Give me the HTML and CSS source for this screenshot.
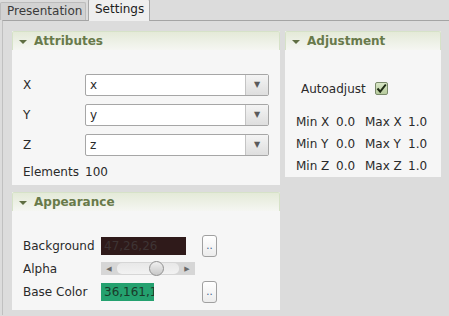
FILE: index.html
```html
<!DOCTYPE html>
<html>
<head>
    <title>Settings</title>
    <link rel="stylesheet" href="styles.css">
</head>
<body>
    <div class="tabs">
        <div class="tab">Presentation</div>
        <div class="tab active">Settings</div>
    </div>
    <div class="pane">
        <div class="column left">
            <div class="group attributes">
                <div class="group-header"><span class="arrow"></span>Attributes</div>
                <div class="group-body">
                    <div class="row">
                        <span class="label">X</span>
                        <div class="combo"><span class="combo-text">x</span><span class="combo-button">&#9660;</span></div>
                    </div>
                    <div class="row">
                        <span class="label">Y</span>
                        <div class="combo"><span class="combo-text">y</span><span class="combo-button">&#9660;</span></div>
                    </div>
                    <div class="row">
                        <span class="label">Z</span>
                        <div class="combo"><span class="combo-text">z</span><span class="combo-button">&#9660;</span></div>
                    </div>
                    <div class="row elements">
                        <span class="label">Elements</span>
                        <span>100</span>
                    </div>
                </div>
            </div>
            <div class="group appearance">
                <div class="group-header"><span class="arrow"></span>Appearance</div>
                <div class="group-body">
                    <div class="row color-row">
                        <span class="label">Background</span>
                        <div class="swatch-box"><span class="swatch dark">47,26,26</span></div>
                        <button class="pick">..</button>
                    </div>
                    <div class="row alpha-row">
                        <span class="label">Alpha</span>
                        <div class="slider">
                            <span class="slider-arrow">&#9664;</span>
                            <span class="groove"><span class="handle"></span></span>
                            <span class="slider-arrow">&#9654;</span>
                        </div>
                    </div>
                    <div class="row color-row">
                        <span class="label">Base Color</span>
                        <div class="swatch-box"><span class="swatch green">36,161,1</span></div>
                        <button class="pick">..</button>
                    </div>
                </div>
            </div>
        </div>
        <div class="column right">
            <div class="group adjustment">
                <div class="group-header"><span class="arrow"></span>Adjustment</div>
                <div class="group-body">
                    <div class="auto-row">
                        <span>Autoadjust</span>
                        <span class="check">
                            <svg width="11" height="11" viewBox="0 0 11 11"><path d="M1.5 5.5 L4.2 8.6 L9.8 1.5" fill="none" stroke="#1e2a14" stroke-width="2"/></svg>
                        </span>
                    </div>
                    <div class="range-row"><span class="r-name">Min X</span><span class="r-val">0.0</span><span class="r-max">Max X</span><span>1.0</span></div>
                    <div class="range-row"><span class="r-name">Min Y</span><span class="r-val">0.0</span><span class="r-max">Max Y</span><span>1.0</span></div>
                    <div class="range-row"><span class="r-name">Min Z</span><span class="r-val">0.0</span><span class="r-max">Max Z</span><span>1.0</span></div>
                </div>
            </div>
        </div>
    </div>
</body>
</html>
```

FILE: styles.css
```css
body {
    margin: 0;
    background-color: #dcdcdc;
    font-family: "DejaVu Sans", sans-serif;
    font-size: 12px;
    color: #2a2a2a;
    width: 449px;
    height: 316px;
    overflow: hidden;
}

/* tab bar */
.tabs {
    display: flex;
    height: 20px;
    align-items: flex-end;
}

.tab {
    height: 17px;
    line-height: 17px;
    padding: 0 6px;
    background-color: #d2d2d2;
    border: 1px solid #bcbcbc;
    border-bottom: none;
    border-radius: 2px 2px 0 0;
    color: #3a3a3a;
    margin-right: 2px;
    width: 72px;
}

.tab.active {
    height: 21px;
    line-height: 19px;
    background-color: #efefef;
    border-color: #a8a8a8;
    color: #202020;
    width: 48px;
    margin-bottom: -1px;
    position: relative;
}

.pane {
    display: flex;
    margin-left: 2px;
    border-top: 1px solid #a4a4a4;
    border-left: 1px solid #c0c0c0;
    padding: 10px 0 0 9px;
    gap: 5px;
    height: 295px;
    box-sizing: border-box;
}

.column {
    display: flex;
    flex-direction: column;
    gap: 7px;
}

.column.left {
    width: 268px;
}

.column.right {
    width: 156px;
}

/* group boxes */
.group {
    background-color: #f6f6f6;
}

.group-header {
    height: 18px;
    line-height: 18px;
    border: 1px solid #d6e2c8;
    border-bottom: none;
    border-radius: 2px 2px 0 0;
    background: linear-gradient(#e4ead8, #f5f6f2);
    font-weight: bold;
    font-size: 12px;
    color: #687a4a;
    padding-left: 6px;
    display: flex;
    align-items: center;
}

.arrow {
    width: 0;
    height: 0;
    border-left: 4px solid transparent;
    border-right: 4px solid transparent;
    border-top: 4px solid #5f6e42;
    margin-right: 7px;
    margin-top: 1px;
}

.group-body {
    padding: 0 11px;
}

.attributes {
    height: 154px;
}

.attributes .group-body {
    padding-top: 24px;
}

.row {
    display: flex;
    align-items: center;
}

.attributes .row {
    height: 22px;
    margin-bottom: 8px;
}

.label {
    width: 62px;
}

.combo {
    width: 182px;
    height: 20px;
    border: 1px solid #a6a6a6;
    border-radius: 2px;
    background-color: #fff;
    display: flex;
}

.combo-text {
    flex: 1;
    line-height: 20px;
    padding-left: 4px;
    border-right: 1px solid #c4c4c4;
}

.combo-button {
    width: 22px;
    text-align: center;
    font-size: 8px;
    line-height: 20px;
    color: #5a5a5a;
    background: linear-gradient(#f4f4f4, #dedede);
}

.row.elements {
    height: 16px;
    margin-top: 2px;
}

.appearance {
    height: 118px;
}

.appearance .group-body {
    padding-top: 23px;
}

.appearance .label {
    width: 78px;
}

.color-row {
    height: 23px;
}

.swatch-box {
    width: 101px;
}

.swatch {
    display: block;
    height: 18px;
    line-height: 18px;
    padding-left: 3px;
    box-sizing: border-box;
    overflow: hidden;
    white-space: nowrap;
}

.swatch.dark {
    width: 85px;
    background-color: #2f1a1a;
    color: #3e3434;
}

.swatch.green {
    width: 53px;
    background-color: #24a16f;
    color: #1a3a2a;
}

.pick {
    width: 15px;
    height: 22px;
    padding: 0;
    border: 1px solid #a0a0a0;
    border-radius: 3px;
    background: linear-gradient(#ffffff, #ececec);
    font-size: 10px;
    color: #3a5a8a;
    line-height: 20px;
    font-family: "DejaVu Sans", sans-serif;
}

.alpha-row {
    height: 23px;
}

.slider {
    display: flex;
    align-items: center;
    width: 94px;
    height: 13px;
    background-color: #d6d6d6;
}

.slider-arrow {
    width: 16px;
    text-align: center;
    font-size: 7px;
    color: #6a6a6a;
}

.groove {
    flex: 1;
    height: 11px;
    background: linear-gradient(#e8e8e8, #f2f2f2);
    border-radius: 5px;
    position: relative;
}

.handle {
    position: absolute;
    left: 32px;
    top: -2px;
    width: 13px;
    height: 13px;
    border-radius: 50%;
    border: 1px solid #909090;
    background: linear-gradient(#f0f0f0, #c8c8c8);
}

/* adjustment */
.adjustment {
    height: 146px;
}

.adjustment .group-body {
    padding: 31px 0 0 11px;
}

.auto-row {
    display: flex;
    align-items: center;
    padding-left: 5px;
    height: 15px;
}

.check {
    margin-left: 9px;
    width: 11px;
    height: 11px;
    border: 1px solid #7a8a6a;
    border-radius: 2px;
    background: linear-gradient(#d8e6c6, #b8cc9e);
    display: flex;
}

.range-row {
    display: flex;
    height: 22px;
    align-items: center;
}

.auto-row + .range-row {
    margin-top: 15px;
}

.r-name {
    width: 40px;
}

.r-val {
    width: 29px;
}

.r-max {
    width: 43px;
}
```
